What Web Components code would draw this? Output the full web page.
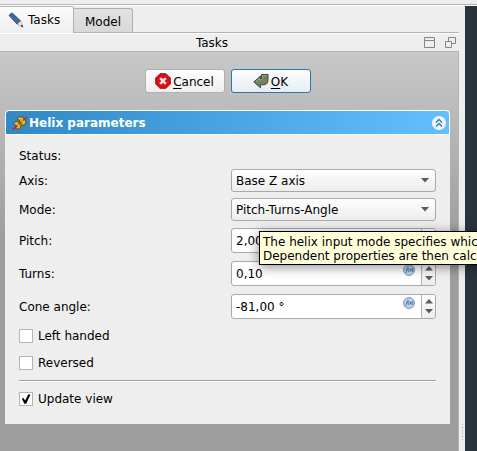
<!DOCTYPE html>
<html lang="en">
<head>
<meta charset="utf-8">
<title>Tasks</title>
<style>
html, body { height: 100%; margin: 0; }
body { font: 12px/14px "DejaVu Sans", sans-serif; color: #000; background: #eee; overflow: hidden; }
</style>
</head>
<body>
<task-window></task-window>
<script>
const define = (name, html, setup) => customElements.define(name, class extends HTMLElement {
  connectedCallback() {
    if (this.shadowRoot) return;
    const root = this.attachShadow({ mode: "open" });
    root.innerHTML = "<style>*{box-sizing:border-box}:host{display:block;box-sizing:border-box}</style>" + html;
    if (setup) setup(this, root);
  }
});

define("tab-strip", `
<style>
:host { display: flex; height: 27px; align-items: stretch; }
button { font: inherit; color: inherit; padding: 0; border: 1px solid #b0b0b0; }
.on { width: 74px; border-width: 1px 1px 0 0; border-radius: 0 2px 0 0; background: linear-gradient(#fcfcfc, #eee); display: flex; align-items: center; gap: 4px; padding: 0 0 0 8px; }
.off { width: 59px; margin-top: 2px; padding-top: 2px; border-left: 0; border-radius: 0 3px 0 0; background: linear-gradient(#e2e2e2, #d8d8d8); border-bottom-color: #b4b4b4; }
.rest { flex: 1; border-bottom: 1px solid #b4b4b4; }
svg { display: block; }
</style>
<button class="on" role="tab" aria-selected="true">
<svg width="16" height="16" viewBox="0 0 16 16"><path d="M1 3.400 4 .8l8.600 8.200-3.300 3.200z" fill="#30588c" stroke="#1d395d" stroke-width=".8"/><path d="m2 3.300 8.200 7.700M3.500 2.100l8.300 7.800" stroke="#6f91b5" stroke-width=".7"/><path d="m9.300 12.200 3.300-3.200 2.300 6z" fill="#eee" stroke="#777" stroke-width=".5"/><path d="m12.600 14.200 1.500-1.500 1 2.500z" fill="#111"/></svg>
<span>Tasks</span></button><button class="off" role="tab" aria-selected="false">Model</button><span class="rest"></span>`);

define("dock-title", `
<style>
:host { display: grid; grid-template-columns: 1fr auto; align-items: center; height: 18px; border-top: 1px solid #fff; }
span { grid-area: 1 / 1 / 2 / 3; text-align: center; padding-right: 35px; }
div { grid-area: 1 / 2; display: flex; gap: 10px; padding-right: 3px; }
button { padding: 0; border: 0; background: none; width: 11px; height: 11px; }
svg { display: block; }
</style>
<span>Tasks</span>
<div><button aria-label="Collapse"><svg width="11" height="11" fill="none" stroke="#858585"><path d="M.5.5h10v10H.5zM1 3.500h9"/></svg></button>
<button aria-label="Float"><svg width="11" height="11" fill="#eee" stroke="#858585"><path d="M3.500.5h7v6h-7z"/><path d="M.5 4.500h6v6h-6z"/></svg></button></div>`);

define("dialog-buttons", `
<style>
:host { display: flex; justify-content: center; gap: 6px; }
button { width: 80px; height: 24px; padding: 1px 0 0; border: 1px solid #b0b0b0; border-radius: 3px; background: linear-gradient(#fefefe, #eee); font: inherit; color: inherit; display: flex; align-items: center; justify-content: center; gap: 2px; }
.ok { border-color: #2e76a6; background: linear-gradient(#fcfdfe, #e6edf2); }
svg { display: block; margin-top: -1px; }
u { text-underline-offset: 2px; }
</style>
<button><svg width="16" height="16"><path d="M5 .7h6L15.300 5v6L11 15.300H5L.7 11V5z" fill="#d61119" stroke="#b30b12"/><path d="m5.200 5.200 5.600 5.600m0-5.600-5.600 5.600" stroke="#f2e4e4" stroke-width="2.500"/></svg><span><u>C</u>ancel</span></button>
<button class="ok"><svg width="16" height="16"><path d="M8.500 1.500h6.500v5.700q0 4.600-5 4.600H7.500v3L.8 8.900 7.500 3v3h.2q.8 0 .8-1z" fill="#71805e" stroke="#424b38"/><path d="M9.500 2.500h4.500M3 8.500l3.500-3.200V7H8q1.500-.3 1.500-2V2.500" fill="none" stroke="#a2ad94" stroke-width=".8"/></svg><span><u>O</u>K</span></button>`);

define("task-group", `
<style>
:host { background: #eee; border-radius: 4px 4px 0 0; }
header { display: flex; align-items: center; height: 25px; padding: 0 3px 0 6px; border: 1px solid #fff; border-radius: 4px 4px 0 0; background: linear-gradient(90deg, #3089c6, #64bfff); color: #fff; }
h2 { margin: 0 auto 0 1px; font-size: 12px; font-weight: bold; }
button { width: 14px; height: 14px; padding: 0; border: 0; border-radius: 50%; background: #f4f4f4; }
svg { display: block; }
.content { display: flex; flex-direction: column; gap: 6px; padding: 14px 14px 15px; }
</style>
<header><svg width="16" height="16"><path d="M5 3.500 7.500 1l1.500 2 1.500-1.500 1.500 3 2 1-.5 4-2.500 1-2-1-.5 3-2.500 2-3-1.500 1-2-2.500-2.500L4 6l3 1.500L8 6z" fill="#c9ac20" stroke="#5a4c17" stroke-width=".9"/><path d="M8 3c3 0 4 3 4 5M4 8.500c2 0 3 2 3 4" fill="none" stroke="#efdc4a" stroke-width="1.200"/><path d="m1 14.500 4.500-4M6.500 9.500l3-2.500M11 5.500 15 2" stroke="#d81c22" stroke-width="1.500"/></svg>
<h2><slot name="title"></slot></h2>
<button aria-label="Collapse group"><svg width="14" height="14" fill="none" stroke="#2888c4" stroke-width="1.500"><path d="m4 6.500 3-3 3 3m-6 4 3-3 3 3"/></svg></button></header>
<div class="content"><slot></slot></div>`);

define("select-field", `
<style>
:host { display: grid; grid-template-columns: 212px 1fr; align-items: center; }
div { display: grid; align-items: center; }
select { grid-area: 1 / 1; appearance: none; width: 100%; height: 23px; padding: 0 4px; border: 1px solid #a9a9a9; border-radius: 3px; background: linear-gradient(#fefefe, #ededed); font: inherit; color: inherit; }
svg { grid-area: 1 / 1; justify-self: end; margin-right: 7px; pointer-events: none; }
</style>
<label for="s"></label><div><select id="s"><option></option></select><svg width="8" height="5"><path d="M0 0h8L4 4.500z" fill="#5b5b5b"/></svg></div>`,
(host, root) => {
  root.querySelector("label").textContent = host.getAttribute("label");
  root.querySelector("option").textContent = host.getAttribute("value");
});

define("spin-field", `
<style>
:host { display: grid; grid-template-columns: 212px 1fr; align-items: center; height: 27px; }
.box { display: flex; height: 25px; border: 1px solid #a9a9a9; border-radius: 3px; background: #fff; overflow: hidden; }
input { flex: 1; min-width: 0; padding: 0 4px; border: 0; outline: 0; background: none; font: inherit; color: inherit; }
button { padding: 0; border: 0; background: none; display: grid; place-items: center; }
.fx { width: 12px; height: 12px; margin: 2px 6px 0 0; }
.steps { width: 14px; border-left: 1px solid #b4b4b4; background: linear-gradient(#fdfdfd, #ededed); display: grid; grid-template-rows: 1fr 1fr; padding: 2px 0; }
svg { display: block; }
</style>
<label for="n"></label><div class="box"><input id="n">
<button class="fx" aria-label="Edit expression"><svg width="12" height="12" fill="none"><circle cx="6" cy="6" r="5.400" fill="#bdd3e8" stroke="#7890aa"/><path d="M3 9 4.500 3.500 5.500 3M2.800 5.800h2.200M6 4q-.8 2 0 4M6.800 4.500l2 3m0-3-2 3M9.500 4q.8 2 0 4" stroke="#3d6c9d" stroke-width=".8"/></svg></button>
<div class="steps"><button aria-label="Increase"><svg width="8" height="5"><path d="M0 4.500h8L4 0z" fill="#5b5b5b"/></svg></button><button aria-label="Decrease"><svg width="8" height="5"><path d="M0 0h8L4 4.500z" fill="#5b5b5b"/></svg></button></div></div>`,
(host, root) => {
  root.querySelector("label").textContent = host.getAttribute("label");
  root.querySelector("input").value = host.getAttribute("value");
});

define("check-field", `
<style>
label { display: flex; align-items: center; gap: 5px; height: 20px; }
input { appearance: none; width: 14px; height: 14px; margin: 0; border: 1px solid #b4b4b4; background: #fff; display: grid; place-items: center; }
input:checked::before { content: ""; width: 10px; height: 10px; background: #000; clip-path: polygon(8% 48%, 25% 40%, 42% 66%, 72% 5%, 95% 5%, 52% 98%, 34% 98%); }
</style>
<label><input type="checkbox"><slot></slot></label>`,
(host, root) => { root.querySelector("input").checked = host.hasAttribute("checked"); });

define("tool-tip", `
<style>
:host { position: absolute; left: 259px; top: 231px; padding: 3px 3px 1px; border: 1px solid #000; background: #ffffdc; white-space: nowrap; box-shadow: 0 2px 12px rgba(0,0,0,.45); }
</style><slot></slot>`);

define("task-window", `
<style>
:host { position: relative; display: flex; flex-direction: column; height: 100%; overflow: hidden; }
.bar { height: 6px; border-bottom: 1px solid #fff; background: linear-gradient(#eee 4px, #b4b4b4 4px); }
.main { flex: 1; display: grid; grid-template-columns: 1fr 6px 12px; min-height: 0; }
.dock { display: flex; flex-direction: column; min-height: 0; }
.scroll { flex: 1; border: solid #b4b4b4; border-width: 1px 1px 0 0; padding: 17px 8px 0 5px; background: linear-gradient(#c8c8c8, #9d9d9d 190px); }
task-group { margin-top: 17px; }
.checks { display: flex; flex-direction: column; gap: 7px; }
.splitter { display: flex; flex-direction: column; align-items: flex-end; justify-content: flex-end; padding: 0 2px 10px 0; }
.splitter::after { content: ""; width: 1px; height: 17px; background: repeating-linear-gradient(#aaa 0 1px, transparent 1px 3px); }
.view { background: #2b343e; }
hr { margin: 1px 0; width: 100%; height: 2px; border: 0; border-top: 1px solid #9d9d9d; border-bottom: 1px solid #fff; }
</style>
<div class="bar"></div>
<div class="main">
<div class="dock">
<tab-strip></tab-strip>
<dock-title></dock-title>
<div class="scroll">
<dialog-buttons></dialog-buttons>
<task-group>
<span slot="title">Helix parameters</span>
<div>Status:</div>
<select-field label="Axis:" value="Base Z axis"></select-field>
<select-field label="Mode:" value="Pitch-Turns-Angle"></select-field>
<spin-field label="Pitch:" value="2,00 mm"></spin-field>
<spin-field label="Turns:" value="0,10"></spin-field>
<spin-field label="Cone angle:" value="-81,00 °"></spin-field>
<div class="checks">
<check-field>Left handed</check-field>
<check-field>Reversed</check-field>
</div>
<hr>
<check-field checked>Update view</check-field>
</task-group>
</div>
</div>
<div class="splitter"></div>
<div class="view"></div>
</div>
<tool-tip>The helix input mode specifies which<br>Dependent properties are then calculated</tool-tip>`);
</script>
</body>
</html>
